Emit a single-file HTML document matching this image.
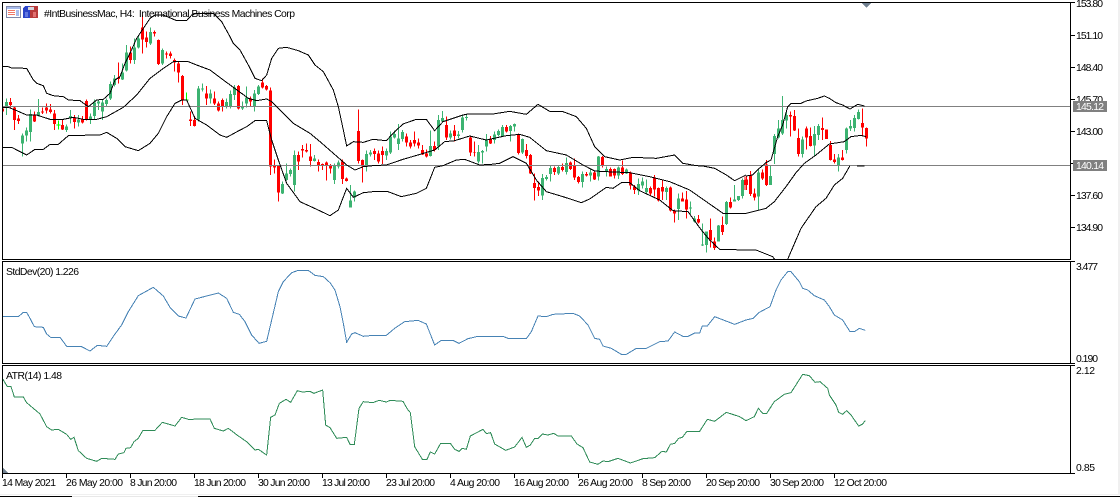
<!DOCTYPE html>
<html>
<head>
<meta charset="utf-8">
<style>
html,body{margin:0;padding:0;background:#fff;width:1120px;height:497px;overflow:hidden}
svg{display:block}
text{font-family:"Liberation Sans",sans-serif;font-size:10.4px;fill:#000}
.r{stroke:#f00;fill:none}
.g{stroke:#3cb371;fill:none}
.w{stroke-width:3}
.b{stroke-width:9}
.k{stroke:#000;stroke-width:3;fill:none}
.s{stroke:#4682b4;stroke-width:3;fill:none}
.a{stroke:#2e8b57;stroke-width:3;fill:none}
</style>
</head>
<body>
<svg width="1120" height="497" viewBox="0 0 1120 497" xmlns="http://www.w3.org/2000/svg">
<defs><clipPath id="c"><rect x="3" y="3" width="1067" height="256"/></clipPath></defs>
<rect width="1120" height="497" fill="#fff"/>
<g shape-rendering="crispEdges">
<g clip-path="url(#c)">
<g transform="scale(.33333)">
<path class="r w" d="M7 320V335M31 294V325M43 320V390M55 345V372M103 335V366M127 322V342M139 310V340M151 312V340M163 330V390M187 360V390M223 345V385M247 348V370M259 298V362M355 188V250M391 140V190M427 45V160M439 95V142M463 92V110M475 118V195M499 155V175M511 155V175M523 175V215M535 185V248M547 225V315M571 335V378M583 348V380M619 258V315M643 275V315M655 305V335M667 295V335M715 255V328M751 290V320M787 235V265M799 255V272M811 262V525M823 478V520M835 495V605M895 455V510M907 435V472M919 430V458M931 432V500M955 478V515M967 490V510M979 485V542M991 492V520M1027 478V552M1039 532V545M1075 328V490M1087 478V547"/>
<path class="r b" d="M7 325V335M31 306V315M43 322V360M55 356V363M103 343V365M127 335V338M139 323V332M151 328V336M163 340V372M187 375V389M223 352V366M247 358V368M259 303V360M355 232V237M391 158V180M427 82V118M439 112V126M463 96V100M475 120V192M499 160V163M511 160V168M523 180V188M535 190V218M547 228V300M571 358V363M583 360V378M619 280V295M643 295V310M655 310V332M667 300V320M715 258V326M751 295V305M787 248V262M799 258V268M811 272V500M823 497V503M835 497V578M895 465V485M907 447V452M919 450V455M931 470V483M955 486V495M967 492V495M979 487V495M991 495V505M1027 485V537M1039 535V543M1075 393V483M1087 480V500"/>
<path class="g w" d="M19 296V345M67 400V470M79 383V425M91 328V425M115 297V350M199 374V396M211 330V370M235 345V380M271 340V372M283 298V360M295 298V330M307 300V360M319 295V318M331 245V300M343 225V260M367 190V240M379 135V215M403 115V192M415 105V145M451 82V135M487 145V195M595 258V365M607 250V275M631 268V310M679 295V325M691 272V325M703 255V300M727 305V330M739 260V322M763 270V335M775 255V285M847 545V582M859 490V542M871 505V530M883 452V575M943 465V484M1003 490V552M1015 482V505M1051 555V623M1063 572V605M1099 452V515M1111 450V470"/>
<path class="g b" d="M19 306V320M67 407V430M79 392V407M91 342V396M115 336V348M199 380V390M211 348V354M235 358V368M271 350V360M283 308V348M295 305V310M307 308V335M319 300V312M331 252V296M343 235V255M367 218V238M379 158V212M403 142V180M415 115V142M451 96V130M487 150V190M595 265V358M607 265V268M631 280V295M679 306V320M691 282V320M703 262V285M727 320V326M739 292V310M763 280V318M775 260V282M847 552V580M859 520V540M871 510V522M883 465V555M943 475V483M1003 495V540M1015 487V500M1051 602V622M1063 575V592M1099 462V497M1111 458V464"/>
<path stroke="#0f0" stroke-width="3" fill="none" d="M175 362V388M169 375H181M559 278V302M553 300H565"/>
</g>
<g transform="translate(373,0) scale(.33333)">
<path class="r w" d="M4 445V480M16 452V490M28 440V492M100 400V440M112 420V445M124 395V440M136 415V445M148 435V465M160 448V472M184 425V455M220 350V420M244 375V425M292 410V468M304 425V470M352 408V432M400 375V397M436 400V463M460 432V475M472 462V522M484 520V602M496 545V588M544 500V525M568 490V515M592 485V510M604 475V540M616 528V550M640 516V530M664 515V540M688 468V502M712 503V530M724 505V535M748 482V525M772 515V568M784 555V582M832 560V588M844 525V590M856 562V605M868 538V600M892 560V635M904 628V668M928 578V605M940 573V655M976 645V670M1012 655V742M1024 712V750M1048 650V705M1072 592V625M1116 530V570"/>
<path class="r b" d="M4 453V462M16 460V485M28 453V465M100 410V428M112 427V440M124 420V430M136 427V436M148 450V463M160 460V470M184 438V450M220 375V413M244 391V408M292 412V458M304 456V458M352 418V430M400 381V395M436 404V459M460 450V468M472 465V520M484 549V564M496 561V572M544 504V516M568 501V510M592 488V507M604 497V533M616 531V546M640 522V526M664 518V539M688 471V495M712 507V530M724 507V527M748 502V522M772 517V557M784 560V570M832 564V580M844 532V568M856 564V602M868 561V575M892 562V632M904 632V640M928 595V605M940 598V628M976 657V668M1012 690V722M1024 724V744M1048 675V696M1072 606V622M1116 540V555"/>
<path class="g w" d="M40 445V480M52 395V462M64 392V415M76 372V450M88 390V425M172 392V470M196 345V450M208 333V365M232 392V418M256 393V415M268 345V398M280 345V362M316 435V490M328 450V490M340 402V455M364 395V430M376 388V410M388 375V410M412 375V425M424 370V395M448 415V462M508 522V600M520 525V542M532 497V545M556 497V525M580 472V524M628 515V562M652 508V545M676 468V542M700 500V530M736 500V537M760 505V522M796 535V585M808 533V565M820 538V582M880 560V600M916 580V660M952 605V642M964 648V668M988 670V738M1000 695V758M1036 675V725M1060 603V675M1084 555V605M1096 588V603M1108 535V595"/>
<path class="g b" d="M40 453V467M52 410V458M64 402V412M76 415V432M88 396V417M172 438V468M196 360V440M208 354V364M232 400V413M256 403V408M268 352V390M280 351V354M316 456V484M328 453V458M340 422V440M364 404V420M376 393V405M388 381V408M412 378V393M424 372V380M448 417V458M508 534V587M520 531V537M532 504V522M556 501V520M580 489V516M628 522V546M652 518V527M676 470V530M700 507V513M736 503V527M760 508V521M796 552V572M808 545V556M820 564V576M880 564V576M916 595V627M952 623V626M964 655V665M988 733V737M1000 695V735M1036 676V725M1060 606V672M1084 598V605M1096 588V600M1108 540V588"/>
</g>
<g transform="translate(746,0) scale(.33333)">
<path class="r w" d="M1 530V570M13 513V588M25 565V602M49 508V540M61 480V558M133 335V410M145 330V393M157 385V470M181 380V448M193 383V440M229 353V420M241 388V417M253 423V482M265 462V490M289 450V482M349 325V410M361 382V440"/>
<path class="r b" d="M1 538V555M13 527V582M25 580V592M49 518V535M61 493V555M133 345V350M145 348V392M157 414V462M181 385V412M193 408V438M229 384V390M241 388V417M253 435V480M265 478V486M289 472V480M349 369V383M361 384V416"/>
<path class="g w" d="M37 505V630M73 497V555M85 402V492M97 360V415M109 288V405M121 335V385M169 410V472M205 378V468M217 372V420M277 462V515M301 383V460M313 360V393M325 345V395M337 328V358"/>
<path class="g b" d="M37 518V590M73 528V555M85 408V462M97 385V412M109 360V400M121 345V362M169 418V462M205 402V437M217 378V405M277 473V498M301 385V450M313 378V386M325 354V384M337 336V357"/>
</g>
<g fill="none">
<path stroke="#808080" stroke-width="1" d="M3 106.5H1070M3 165.5H1070"/>
<g transform="scale(.33333)">
<path class="k" d="M7 200L25 200L35 204L80 205L100 240L110 250L130 257L140 280L160 287L190 290L205 300L240 302L265 320L290 300L310 298L330 280L345 240L360 230L375 190L390 160L410 115L430 85L450 55L465 45L490 45L530 62L560 62L575 45L590 40L640 40L665 65L690 110L700 130L720 150L745 195L765 235L785 242L800 225L815 175L835 145L860 142L895 152L925 165L945 195L970 215L1000 270L1015 320L1030 390L1040 438L1060 425L1090 427L1119 418"/>
<path class="k" d="M7 322L25 322L50 332L80 345L110 345L150 358L190 358L220 352L250 358L290 358L320 350L370 322L410 285L450 235L490 205L520 185L565 185L590 195L630 210L670 240L700 262L745 295L770 302L800 297L815 305L850 340L880 370L930 400L960 425L1000 460L1040 495L1065 510L1090 500L1119 497"/>
<path class="k" d="M7 442L35 442L60 455L80 465L105 448L130 448L150 433L175 433L205 407L240 407L265 405L300 405L320 397L350 415L375 440L415 452L450 430L475 400L500 350L525 310L545 300L560 300L585 355L620 375L660 405L680 412L715 393L740 380L765 362L800 362L815 420L835 480L860 550L900 605L950 628L990 647L1015 630L1040 565L1060 592L1090 578L1119 575"/>
</g>
<g transform="translate(373,0) scale(.33333)">
<path class="k" d="M0 418L40 422L60 400L90 372L130 358L160 358L185 392L210 365L270 345L285 342L360 342L410 334L460 343L495 313L530 334L570 335L610 350L640 385L665 440L695 470L740 480L780 472L850 475L905 465L930 490L970 497L990 498L1025 505L1060 525L1085 542L1119 525"/>
<path class="k" d="M0 497L40 495L90 478L145 462L185 450L215 425L245 422L290 408L340 420L400 407L440 403L470 412L520 452L580 465L630 495L665 513L700 515L770 518L830 530L890 545L950 570L1000 605L1050 640L1119 640"/>
<path class="k" d="M0 575L45 575L85 590L130 580L160 565L185 502L210 497L250 480L275 478L320 495L355 493L380 490L420 470L460 490L490 540L520 575L570 590L625 608L650 597L700 562L720 565L745 548L770 548L800 572L860 600L900 632L945 635L985 690L1010 720L1040 748L1119 750"/>
</g>
<g transform="translate(746,0) scale(.33333)">
<path class="k" d="M0 528L20 525L40 505L60 488L75 480L95 410L110 375L125 320L135 310L165 310L180 303L215 295L235 288L250 295L270 308L290 315L312 327L335 313L355 318"/>
<path class="k" d="M0 640L60 625L85 605L120 560L150 518L175 490L210 465L250 432L295 425L315 410L345 406L360 410"/>
<path class="k" d="M0 750L30 750L80 770L95 790M118 790L125 778L165 685L210 620L240 595L265 555L290 535L312 497M333 498L355 498"/>
</g>
</g>
</g>

<!-- indicators -->
<g transform="translate(0,260) scale(.33333)">
<path class="s" d="M7 170L55 170L70 157L80 157L90 175L103 200L130 202L140 222L152 232L180 232L200 259L243 259L270 273L292 256L320 259L345 222L365 195L385 155L415 107L460 82L490 108L510 142L535 168L558 174L585 117L655 99L680 115L700 157L718 163L735 185L755 225L777 250L800 244L815 180L835 95L850 65L875 38L895 31L925 31L945 46L970 50L990 68L1005 90L1020 140L1030 190L1040 247L1055 222L1065 218L1090 229L1119 226"/>
<path class="a" d="M7 355L22 380L33 380L43 411L70 411L80 428L120 462L140 500L155 510L175 508L200 523L212 538L222 532L235 572L260 595L290 604L305 595L345 598L355 582L372 578L378 565L392 563L402 545L415 535L428 512L465 511L487 487L525 498L545 472L565 478L630 477L643 505L670 513L685 505L715 528L740 545L765 570L775 568L800 585L812 472L825 465L838 430L858 418L872 427L892 392L908 396L930 394L942 400L968 390L977 495L990 503L1010 535L1040 532L1050 553L1063 553L1077 445L1090 425L1119 428"/>
</g>
<g transform="translate(373,260) scale(.33333)">
<path class="s" d="M0 226L40 226L65 205L95 185L135 181L160 192L185 255L205 241L240 241L258 250L285 236L315 229L390 229L405 235L445 236L460 236L475 215L495 168L520 170L540 163L600 160L620 168L645 195L665 235L680 238L690 258L715 265L745 283L760 283L790 265L820 265L860 245L885 243L905 216L930 229L945 229L965 219L980 219L988 198L1003 198L1025 170L1085 193L1119 180"/>
<path class="a" d="M0 428L18 421L40 426L52 421L90 424L103 447L112 458L125 560L148 598L162 598L172 576L185 582L203 550L232 550L245 568L258 574L268 565L280 568L292 528L330 508L340 521L353 518L365 552L398 571L425 561L447 532L460 562L472 555L485 535L495 535L508 522L525 525L542 520L555 528L595 528L612 552L630 563L650 606L675 613L690 603L705 605L735 595L772 609L810 596L845 593L867 574L880 576L892 553L905 550L917 535L928 532L942 514L980 514L1003 478L1025 484L1060 457L1100 470L1119 482"/>
</g>
<g transform="translate(746,260) scale(.33333)">
<path class="s" d="M0 180L22 175L40 157L72 140L90 90L105 60L125 35L135 35L160 65L170 85L185 90L205 107L235 120L250 140L265 165L290 180L312 215L325 215L340 205L358 211"/>
<path class="a" d="M0 482L25 470L37 445L50 460L62 460L85 425L115 403L135 398L170 343L190 347L207 367L222 365L245 385L250 405L270 435L278 457L290 463L302 452L315 465L338 498L350 492L358 481"/>
</g>

<!-- frames -->
<path fill="none" stroke="#000" stroke-width="1" d="M2.5 2.5H1070.5V259.5H2.5ZM2.5 261.5H1070.5V363.5H2.5ZM2.5 365.5H1070.5V473.5H2.5Z"/>
<!-- right ticks -->
<path stroke="#000" stroke-width="1" d="M1071 2.5H1075M1071 35.5H1075M1071 67.5H1075M1071 99.5H1075M1071 131.5H1075M1071 163.5H1075M1071 195.5H1075M1071 227.5H1075M1071 261.5H1075M1071 363.5H1075M1071 365.5H1075M1071 473.5H1075"/>
<!-- x ticks -->
<path stroke="#000" stroke-width="1" d="M2.5 474V478M66.5 474V478M130.5 474V478M194.5 474V478M258.5 474V478M322.5 474V478M386.5 474V478M450.5 474V478M514.5 474V478M578.5 474V478M642.5 474V478M706.5 474V478M770.5 474V478M834.5 474V478"/>
<!-- outer -->
<rect x="1118" y="0" width="2" height="495" fill="#f0f0f0"/>
<rect x="0" y="494" width="1120" height="1" fill="#f0f0f0"/>
<rect x="0" y="496" width="72" height="1" fill="#000"/>
<rect x="72" y="496" width="126" height="1" fill="#e8e8e8"/>
<rect x="198" y="496" width="922" height="1" fill="#000"/>
<!-- markers -->
<polygon points="862,3 871,3 866.5,8" fill="#708090"/>
<polygon points="3,468 3,473 8,473" fill="#708090"/>
<!-- icons -->
<rect x="6" y="6" width="15" height="12" fill="#8088a8"/>
<rect x="7" y="7" width="13" height="10" fill="#fff"/>
<rect x="7" y="7" width="13" height="2" fill="#a8bcec"/>
<rect x="8" y="10" width="7" height="1" fill="#f07868"/>
<rect x="8" y="12" width="7" height="1" fill="#f07868"/>
<rect x="8" y="14" width="7" height="1" fill="#f07868"/>
<rect x="16" y="10" width="3" height="6" fill="#a8bcec"/>
<path d="M23 18V8L25 6H30V18Z" fill="#2a44c8"/>
<path d="M30 18V6H38V18Z" fill="#b83a3a"/>
<rect x="28" y="7" width="6" height="3" fill="#d4d4dc"/>
<rect x="25" y="12" width="3" height="5" fill="#6078e0"/>
<rect x="33" y="12" width="3" height="5" fill="#e07070"/>
</g>

<!-- labels -->
<text x="44" y="17" textLength="251" lengthAdjust="spacing" xml:space="preserve">#IntBusinessMac, H4:  International Business Machines Corp</text>
<text x="6" y="275" textLength="73" lengthAdjust="spacing">StdDev(20) 1.226</text>
<text x="6" y="379" textLength="56" lengthAdjust="spacing">ATR(14) 1.48</text>

<text x="1076" y="7" textLength="27">153.80</text>
<text x="1076" y="39" textLength="27">151.10</text>
<text x="1076" y="71" textLength="27">148.40</text>
<text x="1076" y="103" textLength="27">145.70</text>
<text x="1076" y="135" textLength="27">143.00</text>
<text x="1076" y="199" textLength="27">137.60</text>
<text x="1076" y="231" textLength="27">134.90</text>
<text x="1076" y="270" textLength="22">3.477</text>
<text x="1076" y="362" textLength="22">0.190</text>
<text x="1076" y="374" textLength="19">2.12</text>
<text x="1076" y="471" textLength="19">0.85</text>

<rect x="1073" y="101" width="34" height="11" fill="#808080" shape-rendering="crispEdges"/>
<rect x="1073" y="160" width="34" height="11" fill="#808080" shape-rendering="crispEdges"/>
<text x="1076" y="110" textLength="28" style="fill:#fff">145.12</text>
<text x="1076" y="169" textLength="28" style="fill:#fff">140.14</text>

<text x="2" y="486" textLength="54">14 May 2021</text>
<text x="66" y="486" textLength="57">26 May 20:00</text>
<text x="130" y="486" textLength="47">8 Jun 20:00</text>
<text x="194" y="486" textLength="52">18 Jun 20:00</text>
<text x="258" y="486" textLength="52">30 Jun 20:00</text>
<text x="322" y="486" textLength="48">13 Jul 20:00</text>
<text x="386" y="486" textLength="49">23 Jul 20:00</text>
<text x="450" y="486" textLength="50">4 Aug 20:00</text>
<text x="514" y="486" textLength="55">16 Aug 20:00</text>
<text x="578" y="486" textLength="55">26 Aug 20:00</text>
<text x="642" y="486" textLength="49">8 Sep 20:00</text>
<text x="706" y="486" textLength="54">20 Sep 20:00</text>
<text x="770" y="486" textLength="54">30 Sep 20:00</text>
<text x="834" y="486" textLength="53">12 Oct 20:00</text>
</svg>
</body>
</html>
